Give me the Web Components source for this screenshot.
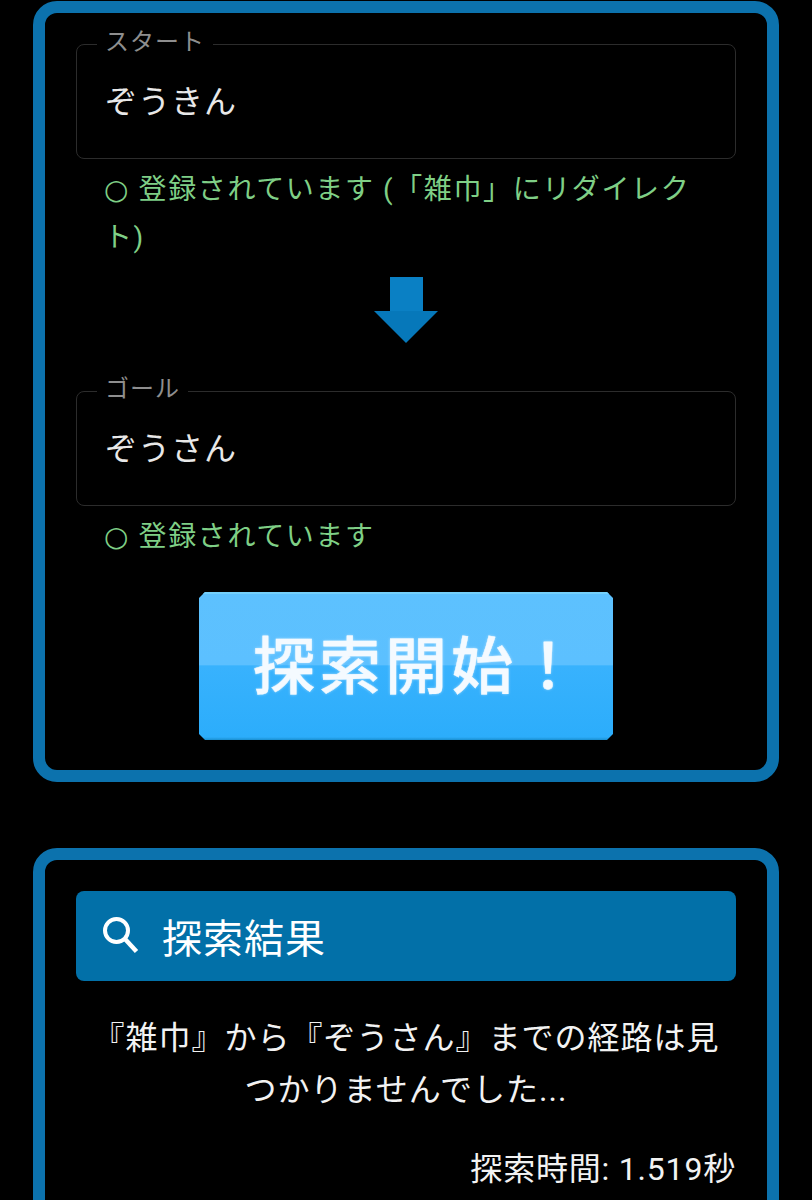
<!DOCTYPE html>
<html lang="ja">
<head>
<meta charset="utf-8">
<title>探索</title>
<style>
  html, body { margin: 0; background: #000; height: 1200px; overflow: hidden; }
  body {
    font-family: "Roboto", "Noto Sans CJK JP", sans-serif;
    color: #fff;
    padding: 1px 33px 0;
    box-sizing: border-box;
  }
</style>
</head>
<body>
<panel-box>
  <word-field label="スタート" value="ぞうきん" status="○ 登録されています (「雑巾」にリダイレクト)"></word-field>
  <down-arrow></down-arrow>
  <word-field label="ゴール" value="ぞうさん" status="○ 登録されています"></word-field>
  <start-button>探索開始！</start-button>
</panel-box>
<panel-box class="second">
  <result-header>探索結果</result-header>
  <result-body time="探索時間: 1.519秒">『雑巾』から『ぞうさん』までの経路は見つかりませんでした...</result-body>
</panel-box>

<script>
class PanelBox extends HTMLElement {
  constructor() {
    super();
    this.attachShadow({ mode: 'open' });
    this.shadowRoot.innerHTML = `
      <style>
        :host {
          display: block;
          box-sizing: border-box;
          border: 12px solid #0c72ad;
          border-radius: 24px;
          padding: 15px 31px 30px;
          background: #000;
        }
        :host(.second) {
          margin-top: 66px;
          padding-top: 31px;
        }
      </style>
      <slot></slot>
    `;
  }
}

class WordField extends HTMLElement {
  constructor() {
    super();
    this.attachShadow({ mode: 'open' });
  }

  connectedCallback() {
    const label = this.getAttribute('label') || '';
    const value = this.getAttribute('value') || '';
    const status = this.getAttribute('status') || '';
    this.shadowRoot.innerHTML = `
      <style>
        :host { display: block; }
        fieldset {
          margin: 0;
          padding: 0 28px;
          height: 131px;
          box-sizing: border-box;
          border: 1px solid #2c2c2c;
          border-radius: 8px;
        }
        legend {
          padding: 0 8px 4px;
          margin-left: -8px;
          font-size: 24px;
          letter-spacing: 1px;
          line-height: 28px;
          color: #8e8e8e;
        }
        .value {
          font-size: 32px;
          letter-spacing: 1px;
          line-height: 44px;
          margin-top: 20px;
          color: #e8e8e8;
        }
        .status {
          margin: 7px 0 0;
          padding: 0 28px;
          font-family: "Roboto", "DejaVu Sans", "Noto Sans CJK JP", sans-serif;
          font-size: 28px;
          letter-spacing: 1.6px;
          line-height: 48px;
          color: #7fcf86;
          text-spacing-trim: space-all;
        }
      </style>
      <fieldset>
        <legend>${label}</legend>
        <div class="value">${value}</div>
      </fieldset>
      <p class="status">${status}</p>
    `;
  }
}

class DownArrow extends HTMLElement {
  constructor() {
    super();
    this.attachShadow({ mode: 'open' });
    this.shadowRoot.innerHTML = `
      <style>
        :host { display: flex; justify-content: center; padding: 15px 0 32px; }
        svg { display: block; }
      </style>
      <svg width="66" height="66" viewBox="0 0 66 66">
        <rect x="17" y="0" width="33" height="34" fill="#0a80c4"/>
        <path d="M1 34H65L33 66Z" fill="#0678ba"/>
      </svg>
    `;
  }
}

class StartButton extends HTMLElement {
  constructor() {
    super();
    this.attachShadow({ mode: 'open' });
    this.shadowRoot.innerHTML = `
      <style>
        :host { display: flex; justify-content: center; margin-top: 31px; }
        .btn {
          width: 414px;
          height: 148px;
          display: flex;
          align-items: center;
          justify-content: center;
          box-sizing: border-box;
          padding: 0 0 8px 24px;
          clip-path: polygon(6px 0, 408px 0, 414px 6px, 414px 142px, 408px 148px, 6px 148px, 0 142px, 0 6px);
          background:
            linear-gradient(#74d0fb 0, #74d0fb 2px, transparent 2px),
            linear-gradient(to bottom, #5dc1fe 0, #5cc0ff 49%, #38b2fd 50%, #2cadfb 98%, #1a8fd0 100%);
          font-family: "Noto Sans CJK JP", sans-serif;
          font-weight: 500;
          font-size: 62px;
          letter-spacing: 4px;
          color: #f4faff;
          -webkit-text-stroke: .4px #f4faff;
          text-shadow: 0 0 3px rgba(255,255,255,.6);
        }
      </style>
      <div class="btn"><slot></slot></div>
    `;
  }
}

class ResultHeader extends HTMLElement {
  constructor() {
    super();
    this.attachShadow({ mode: 'open' });
    this.shadowRoot.innerHTML = `
      <style>
        :host {
          display: flex;
          align-items: center;
          height: 90px;
          background: #0270a8;
          border-radius: 8px;
          padding-left: 24px;
          gap: 22px;
          font-size: 40px;
          letter-spacing: 1px;
          color: #fff;
        }
        svg { display: block; flex: none; }
      </style>
      <svg width="40" height="40" viewBox="0 0 40 40" fill="none" stroke="#fff">
        <circle cx="16.5" cy="14.5" r="11.5" stroke-width="4"/>
        <path d="M25 23L36.5 35.5" stroke-width="4.5"/>
      </svg>
      <slot></slot>
    `;
  }
}

class ResultBody extends HTMLElement {
  constructor() {
    super();
    this.attachShadow({ mode: 'open' });
  }

  connectedCallback() {
    const time = this.getAttribute('time') || '';
    this.shadowRoot.innerHTML = `
      <style>
        :host { display: block; font-size: 32px; color: #f2f2f2; }
        .msg {
          margin: 31px 0 0;
          padding: 0 14px;
          line-height: 52px;
          letter-spacing: 1px;
          text-align: center;
        }
        .time {
          margin: 29px 0 0;
          line-height: 48px;
          letter-spacing: .8px;
          text-align: right;
        }
      </style>
      <p class="msg"><slot></slot></p>
      <p class="time">${time}</p>
    `;
  }
}

customElements.define('panel-box', PanelBox);
customElements.define('word-field', WordField);
customElements.define('down-arrow', DownArrow);
customElements.define('start-button', StartButton);
customElements.define('result-header', ResultHeader);
customElements.define('result-body', ResultBody);
</script>
</body>
</html>
